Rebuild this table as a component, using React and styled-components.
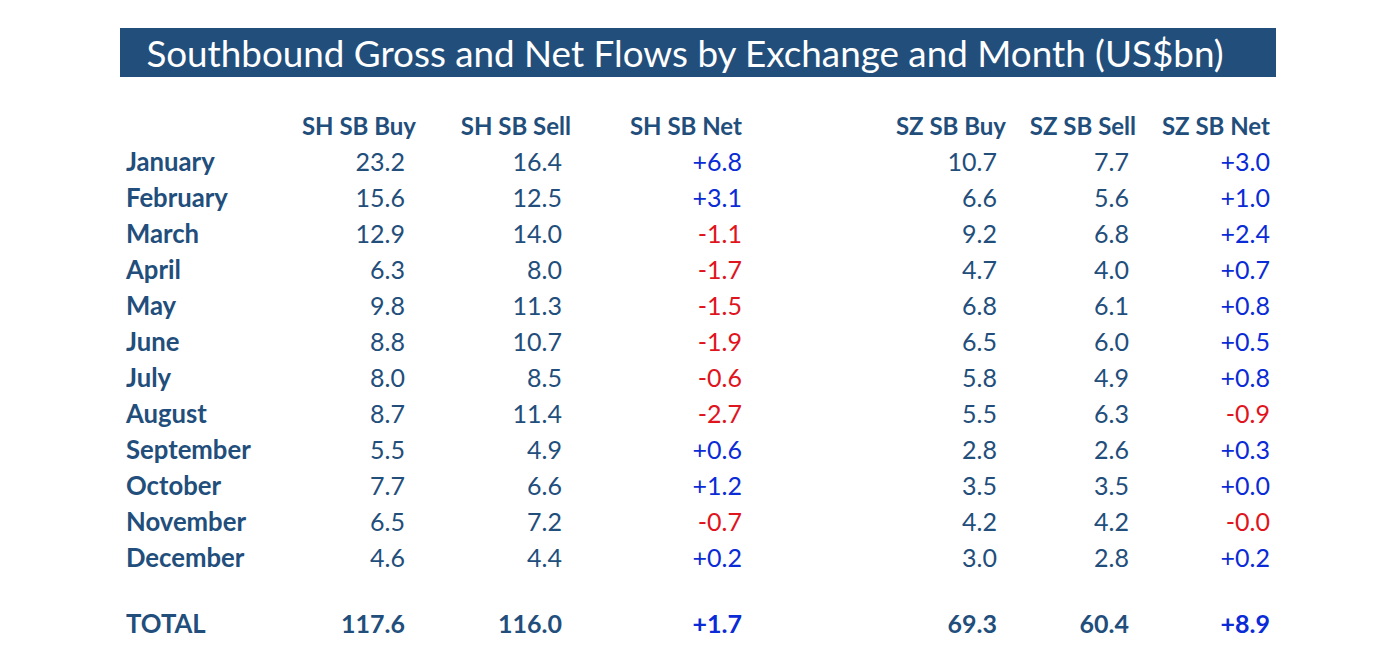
import React from 'react';
import styled, { createGlobalStyle } from 'styled-components';

const GlobalStyle = createGlobalStyle`
    body {
        margin: 0;
        background: #ffffff;
        font-family: Lato, "Open Sans", sans-serif;
    }
`;

const Page = styled.div`
    width: 1394px;
    height: 668px;
    padding: 28px 0 0 120px;
    box-sizing: border-box;
`;

const Banner = styled.div`
    width: 1156px;
    height: 49px;
    background: #224e7c;
    color: #ffffff;
    display: flex;
    align-items: center;
    justify-content: center;
    font-size: 36.8px;
    padding-right: 26px;
    box-sizing: border-box;
    white-space: nowrap;
`;

const Table = styled.div`
    display: grid;
    grid-template-columns: 174px 116px 155px 171px 264px 130px 134px;
    grid-template-rows: repeat(13, 36px) 30px 36px;
    margin: 31px 0 0 6px;
    width: 1144px;
    color: #224e7c;
    font-size: 25px;
`;

const Cell = styled.div`
    display: flex;
    align-items: center;
    justify-content: ${p => (p.$left ? 'flex-start' : 'flex-end')};
    padding-right: ${p => p.$pad || 0}px;
    padding-bottom: 2px;
    font-size: ${p => (p.$head ? '24px' : p.$left ? '25.7px' : '25px')};
    font-weight: ${p => (p.$bold ? 700 : 400)};
    color: ${p => (p.$tone === 'pos' ? '#0a2bd6' : p.$tone === 'neg' ? '#e0141c' : '#224e7c')};
    white-space: nowrap;
`;

const Spacer = styled.div`
    grid-column: 1 / -1;
`;

const months = [
    ['January', '23.2', '16.4', '+6.8', '10.7', '7.7', '+3.0'],
    ['February', '15.6', '12.5', '+3.1', '6.6', '5.6', '+1.0'],
    ['March', '12.9', '14.0', '-1.1', '9.2', '6.8', '+2.4'],
    ['April', '6.3', '8.0', '-1.7', '4.7', '4.0', '+0.7'],
    ['May', '9.8', '11.3', '-1.5', '6.8', '6.1', '+0.8'],
    ['June', '8.8', '10.7', '-1.9', '6.5', '6.0', '+0.5'],
    ['July', '8.0', '8.5', '-0.6', '5.8', '4.9', '+0.8'],
    ['August', '8.7', '11.4', '-2.7', '5.5', '6.3', '-0.9'],
    ['September', '5.5', '4.9', '+0.6', '2.8', '2.6', '+0.3'],
    ['October', '7.7', '6.6', '+1.2', '3.5', '3.5', '+0.0'],
    ['November', '6.5', '7.2', '-0.7', '4.2', '4.2', '-0.0'],
    ['December', '4.6', '4.4', '+0.2', '3.0', '2.8', '+0.2'],
];

const tone = (s) => (s.startsWith('-') ? 'neg' : 'pos');

const headers = ['SH SB Buy', 'SH SB Sell', 'SH SB Net', 'SZ SB Buy', 'SZ SB Sell', 'SZ SB Net'];

const Row = ({ cells: [label, shBuy, shSell, shNet, szBuy, szSell, szNet], bold }) => (
    <>
        <Cell $left $bold>{label}</Cell>
        <Cell $pad={11} $bold={bold}>{shBuy}</Cell>
        <Cell $pad={9} $bold={bold}>{shSell}</Cell>
        <Cell $tone={tone(shNet)} $bold={bold}>{shNet}</Cell>
        <Cell $pad={9} $bold={bold}>{szBuy}</Cell>
        <Cell $pad={7} $bold={bold}>{szSell}</Cell>
        <Cell $tone={tone(szNet)} $bold={bold}>{szNet}</Cell>
    </>
);

const App = () => (
    <Page>
        <GlobalStyle />
        <Banner>Southbound Gross and Net Flows by Exchange and Month (US$bn)</Banner>
        <Table>
            <Cell />
            {headers.map(h => (
                <Cell key={h} $head $bold>{h}</Cell>
            ))}
            {months.map(row => (
                <Row key={row[0]} cells={row} />
            ))}
            <Spacer />
            <Row cells={['TOTAL', '117.6', '116.0', '+1.7', '69.3', '60.4', '+8.9']} bold />
        </Table>
    </Page>
);

export default App;
